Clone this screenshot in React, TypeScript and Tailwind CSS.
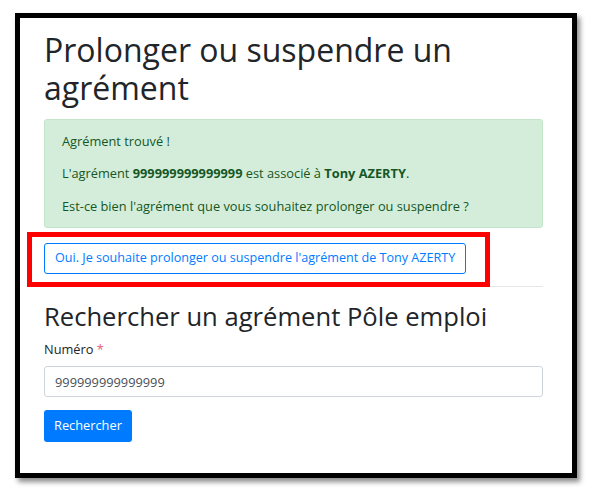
export default function App() {
  return (
    <div className="w-[592px] h-[498px] bg-white pt-[13px] pl-[15px] font-['Open_Sans',sans-serif] text-[#212529]">
      <div className="relative w-[562px] h-[465px] border-[5px] border-black bg-white shadow-[3px_4px_5px_rgba(0,0,0,0.45)] pt-[13px] pl-[24px] pr-[29px]">
        <h1 className="text-[32px] leading-[38px] font-medium">
          Prolonger ou suspendre un agrément
        </h1>

        <div className="mt-[12px] h-[109px] rounded-[3px] border border-[#c3e6cb] bg-[#d4edda] px-[17px] pt-[11px] text-[12.8px] leading-[20px] text-[#155724]">
          <p>Agrément trouvé !</p>
          <p className="mt-[12px]">
            L'agrément <strong>999999999999999</strong> est associé à <strong>Tony AZERTY</strong>.
          </p>
          <p className="mt-[13px]">Est-ce bien l'agrément que vous souhaitez prolonger ou suspendre ?</p>
        </div>

        <button className="mt-[15px] h-[31px] rounded-[3px] border border-[#007bff] px-[10px] text-[12.6px] text-[#007bff]">
          Oui. Je souhaite prolonger ou suspendre l'agrément de Tony AZERTY
        </button>

        <hr className="mt-[12px] border-t border-[#e6e6e6]" />

        {/* annotation around the confirm button */}
        <div className="absolute left-[7px] top-[214px] w-[463px] h-[55px] border-[5px] border-[#ff0000]" />

        <h2 className="mt-[14px] text-[25.6px] leading-[31px] font-medium">
          Rechercher un agrément Pôle emploi
        </h2>

        <label className="mt-[8px] block text-[12.8px] leading-[19px]">
          Numéro <span className="text-[#e4606d]">*</span>
        </label>

        <input
          readOnly
          value="999999999999999"
          className="mt-[7px] block h-[31px] w-full rounded-[3px] border border-[#ced4da] px-[10px] text-[12.8px] text-[#495057] outline-none"
        />

        <button className="mt-[13px] h-[32px] rounded-[3px] bg-[#007bff] px-[10px] text-[12.8px] text-white">
          Rechercher
        </button>
      </div>
    </div>
  );
}
